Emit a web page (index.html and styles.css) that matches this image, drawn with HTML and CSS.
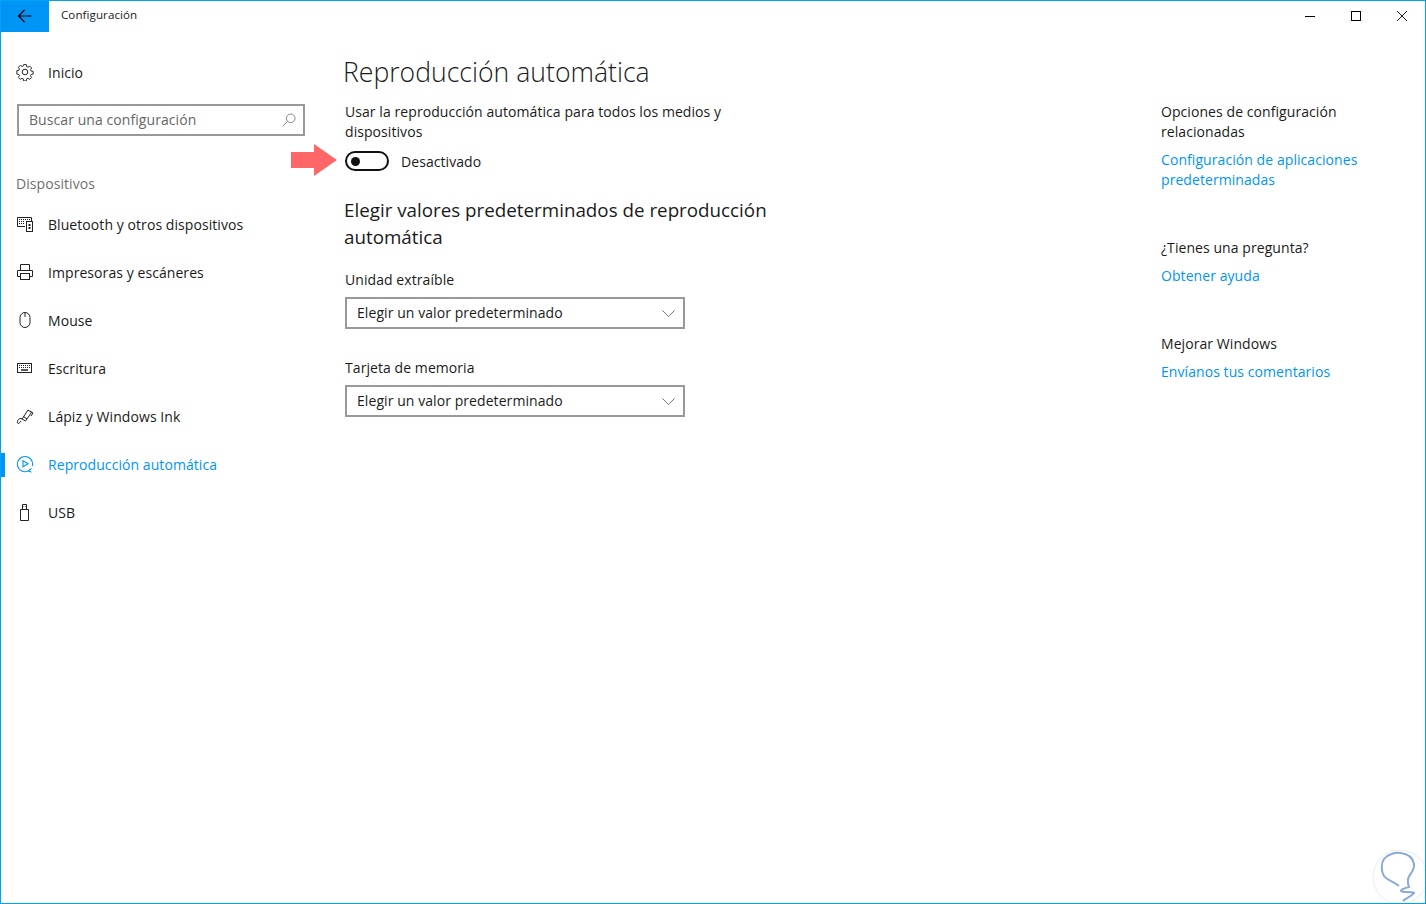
FILE: index.html
```html
<!DOCTYPE html>
<html lang="es">
<head>
    <meta charset="UTF-8">
    <meta name="viewport" content="width=device-width, initial-scale=1.0">
    <title>Configuración</title>
    <link rel="stylesheet" href="styles.css">
</head>
<body>
    <div class="window">
        <header class="titlebar">
            <button class="back-btn" aria-label="Atrás">
                <svg width="16" height="14" viewBox="0 0 16 14"><path d="M14.500 7H1.500M7.500 1L1.500 7l6 6" fill="none" stroke="#000" stroke-width="1.200"/></svg>
            </button>
            <span class="app-title">Configuración</span>
            <div class="window-controls">
                <span class="ctrl"><svg width="12" height="12" viewBox="0 0 12 12"><path d="M1 6.500h10" stroke="#000" fill="none"/></svg></span>
                <span class="ctrl"><svg width="12" height="12" viewBox="0 0 12 12"><rect x="1.500" y="1.500" width="9" height="9" stroke="#000" fill="none"/></svg></span>
                <span class="ctrl"><svg width="12" height="12" viewBox="0 0 12 12"><path d="M1 1l10 10M11 1L1 11" stroke="#000" stroke-width="0.900" fill="none"/></svg></span>
            </div>
        </header>

        <div class="layout">
            <nav class="sidebar">
                <a class="nav-item home">
                    <svg class="nav-icon" width="18" height="18" viewBox="0 0 18 18"><g fill="none" stroke="#222" stroke-width="1"><circle cx="9" cy="9" r="2.800"/><path d="M7.600 1.200h2.800l.4 2.200 1.300.6 1.900-1.200 2 2-1.200 1.900.6 1.300 2.200.4v2.800l-2.200.4-.6 1.300 1.200 1.900-2 2-1.900-1.200-1.300.6-.4 2.200H7.600l-.4-2.200-1.300-.6-1.900 1.200-2-2 1.200-1.900-.6-1.300-2.200-.4V7.600l2.200-.4.6-1.300-1.200-1.900 2-2 1.900 1.200 1.300-.6z" transform="translate(.45 .45) scale(.95)"/></g></svg>
                    <span>Inicio</span>
                </a>
                <div class="search">
                    <span>Buscar una configuración</span>
                    <svg width="14" height="14" viewBox="0 0 14 14"><g fill="none" stroke="#888" stroke-width="1"><circle cx="8.700" cy="5.300" r="4.300"/><path d="M5.600 8.400L.8 13.200"/></g></svg>
                </div>
                <div class="nav-heading">Dispositivos</div>
                <a class="nav-item">
                    <svg class="nav-icon" width="18" height="18" viewBox="0 0 18 18"><g fill="none" stroke="#222"><path d="M9 11.500H1.500v-9h14V6"/><rect x="10.500" y="6.500" width="6" height="10"/><path d="M3 4.500h11M3 6.500h6M3 8.500h6" stroke-dasharray="1 1"/><path d="M13.500 9v5" stroke-width="2" stroke-dasharray="2 1"/></g></svg>
                    <span>Bluetooth y otros dispositivos</span>
                </a>
                <a class="nav-item">
                    <svg class="nav-icon" width="18" height="18" viewBox="0 0 18 18"><g fill="none" stroke="#222"><path d="M4.500 7V1.500h9V7M4.500 13.500h-3V7.500h15v6h-3"/><rect x="4.500" y="10.500" width="9" height="6"/></g></svg>
                    <span>Impresoras y escáneres</span>
                </a>
                <a class="nav-item">
                    <svg class="nav-icon" width="18" height="18" viewBox="0 0 18 18"><g fill="none" stroke="#222"><rect x="4" y="1.500" width="10" height="15" rx="5"/><path d="M9 2v4"/></g></svg>
                    <span>Mouse</span>
                </a>
                <a class="nav-item">
                    <svg class="nav-icon" width="18" height="18" viewBox="0 0 18 18"><g fill="none" stroke="#222"><rect x="1.500" y="4.500" width="14" height="9"/><path d="M3 6.500h11M3 8.500h11" stroke-dasharray="1 1"/><path d="M5 11h7" stroke-width="1.500"/></g></svg>
                    <span>Escritura</span>
                </a>
                <a class="nav-item">
                    <svg class="nav-icon" width="18" height="18" viewBox="0 0 18 18"><g fill="none" stroke="#222"><path d="M6 12L12 3l3.500 2.500L9.500 14z"/><path d="M7.500 9.500l3.500 2.500"/><path d="M6 12C3 10 1 14 1.500 16c.5 1 2.500 0 3.500-2"/><path d="M14 4l3 2-2 3"/></g></svg>
                    <span>Lápiz y Windows Ink</span>
                </a>
                <a class="nav-item active">
                    <svg class="nav-icon" width="18" height="18" viewBox="0 0 18 18"><g fill="none" stroke="#0095f5" stroke-width="1.100"><path d="M12.500 15.800A7.600 7.600 0 1 1 16.300 11"/><path d="M7 5.800v6l5-3z"/><path d="M15.500 13.500l-3 2.300 2.800 1.400"/></g></svg>
                    <span>Reproducción automática</span>
                </a>
                <a class="nav-item">
                    <svg class="nav-icon" width="18" height="18" viewBox="0 0 18 18"><g fill="none" stroke="#222"><path d="M4.500 6.500h8v11h-8zM6.500 6.500v-5h4v5"/><path d="M7.500 3.500h.6M9.500 3.500h.6"/></g></svg>
                    <span>USB</span>
                </a>
            </nav>

            <main class="content">
                <h1>Reproducción automática</h1>
                <p class="intro">Usar la reproducción automática para todos los medios y dispositivos</p>
                <div class="toggle-row">
                    <span class="toggle"><span class="knob"></span></span>
                    <span class="toggle-text">Desactivado</span>
                </div>
                <h2>Elegir valores predeterminados de reproducción automática</h2>
                <label class="field-label">Unidad extraíble</label>
                <div class="select">
                    <span>Elegir un valor predeterminado</span>
                    <svg width="13" height="7" viewBox="0 0 13 7"><path d="M.5.500l6 6 6-6" fill="none" stroke="#777"/></svg>
                </div>
                <label class="field-label">Tarjeta de memoria</label>
                <div class="select">
                    <span>Elegir un valor predeterminado</span>
                    <svg width="13" height="7" viewBox="0 0 13 7"><path d="M.5.500l6 6 6-6" fill="none" stroke="#777"/></svg>
                </div>
            </main>

            <aside class="related">
                <section>
                    <p>Opciones de configuración relacionadas</p>
                    <a class="link">Configuración de aplicaciones predeterminadas</a>
                </section>
                <section>
                    <p>¿Tienes una pregunta?</p>
                    <a class="link">Obtener ayuda</a>
                </section>
                <section>
                    <p>Mejorar Windows</p>
                    <a class="link">Envíanos tus comentarios</a>
                </section>
            </aside>
        </div>

        <!-- annotation arrow -->
        <svg class="arrow" width="46" height="32" viewBox="0 0 46 32"><path d="M0 8h23V0l23 16-23 16v-8H0z" fill="#fd6767"/></svg>

        <!-- watermark -->
        <svg class="watermark" width="56" height="56" viewBox="0 0 56 56"><circle cx="28" cy="28" r="27" fill="#fff" stroke="#e6ecf5"/><path d="M27 37C22 33 15 31 12 27C9 22 9 14 12 10C16 5 24 3 29 4C36 5 41 9 42 15C43 22 37 25 36 30C35.500 33 36 36 37 38C33 39 29 40 29 42C31 44 38 42 42 44C40 47 34 49 31 52" fill="none" stroke="#8aa8d8" stroke-width="2"/></svg>
    </div>
</body>
</html>
```

FILE: styles.css
```css
* {
    box-sizing: border-box;
}

html, body {
    margin: 0;
    height: 100%;
}

body {
    background: #fff;
    color: #1a1a1a;
    font-family: "Open Sans", "Noto Sans", sans-serif;
    font-size: 14px;
    line-height: 20px;
    letter-spacing: .07px;
}

.window {
    position: relative;
    height: 904px;
    border: 1px solid #00a2f5;
    overflow: hidden;
}

.titlebar {
    display: flex;
    align-items: center;
    height: 31px;
}

.back-btn {
    width: 48px;
    height: 31px;
    padding: 0 0 2px;
    border: 0;
    background: #0095f5;
    display: flex;
    align-items: center;
    justify-content: center;
}

.app-title {
    margin: 0 0 3px 12px;
    font-size: 11.600px;
}

.window-controls {
    margin-left: auto;
    display: flex;
}

.ctrl {
    width: 46px;
    height: 31px;
    padding-bottom: 2px;
    display: flex;
    align-items: center;
    justify-content: center;
}

.layout {
    display: flex;
}

.sidebar {
    width: 344px;
    flex-shrink: 0;
    padding-top: 17px;
}

.nav-item {
    position: relative;
    display: flex;
    align-items: center;
    height: 48px;
    padding-left: 15px;
    color: #1a1a1a;
}

.nav-item.home {
    margin-bottom: 7px;
}

.nav-icon {
    margin: 0 14px 2px 0;
    flex-shrink: 0;
}

.nav-item.active {
    color: #0095f5;
}

.nav-item.active::before {
    content: "";
    position: absolute;
    left: 0;
    top: 12px;
    width: 4px;
    height: 24px;
    background: #0095f5;
}

.search {
    display: flex;
    align-items: center;
    justify-content: space-between;
    width: 288px;
    height: 32px;
    margin-left: 16px;
    padding: 0 7px 0 10px;
    border: 2px solid #999;
    color: #666;
}

.nav-heading {
    margin: 38px 0 7px 15px;
    color: #707070;
}

.content {
    width: 816px;
    flex-shrink: 0;
}

h1 {
    margin: 20px 0 0 -2px;
    font-size: 26.600px;
    font-weight: 300;
    line-height: 40px;
    letter-spacing: 0;
}

.intro {
    width: 400px;
    margin: 10px 0 0;
}

.toggle-row {
    display: flex;
    align-items: center;
    gap: 12px;
    height: 20px;
    margin-top: 9px;
}

.toggle {
    display: flex;
    align-items: center;
    width: 44px;
    height: 20px;
    padding-left: 4px;
    border: 2px solid #111;
    border-radius: 10px;
}

.knob {
    width: 9px;
    height: 9px;
    border-radius: 50%;
    background: #111;
}

.toggle-text {
    padding-top: 2px;
}

h2 {
    width: 440px;
    margin: 26px 0 0 -1px;
    font-size: 18.800px;
    font-weight: 400;
    line-height: 27px;
    letter-spacing: 0;
}

.field-label {
    display: block;
    margin-top: 19px;
}

.select {
    display: flex;
    align-items: center;
    justify-content: space-between;
    width: 340px;
    height: 32px;
    margin-top: 7px;
    padding: 0 8px 0 10px;
    border: 2px solid #999;
}

.select + .field-label {
    margin-top: 29px;
}

.related {
    padding-top: 70px;
}

.related section {
    margin-bottom: 48px;
    width: 220px;
}

.related p {
    margin: 0;
}

.link {
    display: block;
    margin-top: 8px;
    color: #0095f5;
}

.arrow {
    position: absolute;
    left: 290px;
    top: 143px;
}

.watermark {
    position: absolute;
    right: -3px;
    bottom: -2px;
}
```
